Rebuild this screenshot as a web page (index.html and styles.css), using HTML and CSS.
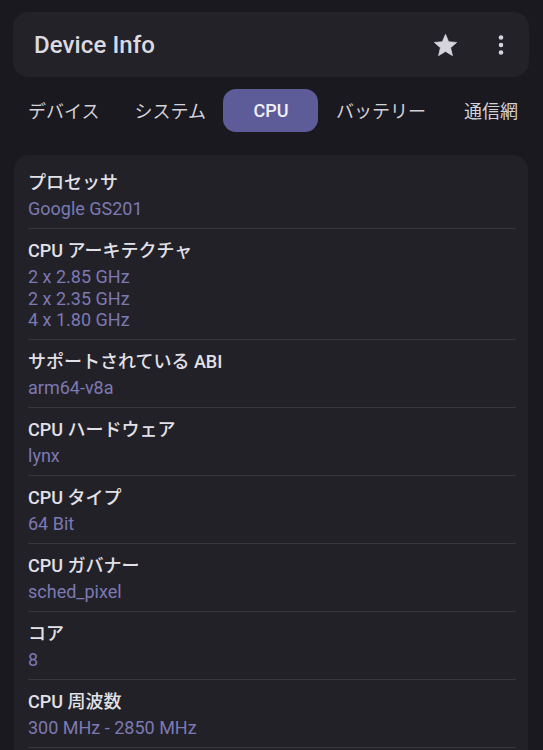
FILE: index.html
```html
<!DOCTYPE html>
<html lang="ja">
<head>
    <meta charset="UTF-8">
    <meta name="viewport" content="width=device-width, initial-scale=1.0">
    <title>Device Info - CPU</title>
    <link rel="stylesheet" href="styles.css">
</head>
<body>
    <div class="app-bar">
        <h1>Device Info</h1>
        <div class="app-bar-actions">
            <button class="icon-btn" aria-label="お気に入り">
                <svg viewBox="0 0 24 24" width="27" height="27">
                    <path d="M12 17.27 18.18 21l-1.64-7.03L22 9.24l-7.19-.61L12 2 9.19 8.63 2 9.24l5.46 4.73L5.82 21z" fill="currentColor" stroke="currentColor" stroke-width="0.6" stroke-linejoin="round"/>
                </svg>
            </button>
            <button class="icon-btn" aria-label="メニュー">
                <svg viewBox="0 0 24 24" width="26" height="26">
                    <circle cx="12" cy="5" r="2.1" fill="currentColor"/>
                    <circle cx="12" cy="12" r="2.1" fill="currentColor"/>
                    <circle cx="12" cy="19" r="2.1" fill="currentColor"/>
                </svg>
            </button>
        </div>
    </div>

    <nav class="tabs">
        <a class="tab">デバイス</a>
        <a class="tab">システム</a>
        <a class="tab active">CPU</a>
        <a class="tab">バッテリー</a>
        <a class="tab">通信網</a>
    </nav>

    <div class="info-card">
        <div class="info-row">
            <div class="info-label">プロセッサ</div>
            <div class="info-value">Google GS201</div>
        </div>
        <div class="info-row">
            <div class="info-label">CPU アーキテクチャ</div>
            <div class="info-value">2 x 2.85 GHz</div>
            <div class="info-value">2 x 2.35 GHz</div>
            <div class="info-value">4 x 1.80 GHz</div>
        </div>
        <div class="info-row">
            <div class="info-label">サポートされている ABI</div>
            <div class="info-value">arm64-v8a</div>
        </div>
        <div class="info-row">
            <div class="info-label">CPU ハードウェア</div>
            <div class="info-value">lynx</div>
        </div>
        <div class="info-row">
            <div class="info-label">CPU タイプ</div>
            <div class="info-value">64 Bit</div>
        </div>
        <div class="info-row">
            <div class="info-label">CPU ガバナー</div>
            <div class="info-value">sched_pixel</div>
        </div>
        <div class="info-row">
            <div class="info-label">コア</div>
            <div class="info-value">8</div>
        </div>
        <div class="info-row">
            <div class="info-label">CPU 周波数</div>
            <div class="info-value">300 MHz - 2850 MHz</div>
        </div>
    </div>
</body>
</html>
```

FILE: styles.css
```css
* {
    margin: 0;
    padding: 0;
    box-sizing: border-box;
}

html, body {
    height: 100%;
    overflow: hidden;
}

body {
    font-family: Roboto, "Noto Sans CJK JP", sans-serif;
    background: #1a191f;
    color: #e0dfe5;
    padding: 12px 14px 0 13px;
}

.app-bar {
    display: flex;
    align-items: center;
    justify-content: space-between;
    height: 65px;
    background: #232229;
    border-radius: 15px;
    padding: 1px 12px 0 21px;
}

.app-bar h1 {
    font-size: 24px;
    font-weight: 500;
    color: #dcdae1;
    letter-spacing: 0.1px;
}

.app-bar-actions {
    display: flex;
    align-items: center;
    gap: 22px;
}

.icon-btn {
    display: flex;
    align-items: center;
    justify-content: center;
    width: 33px;
    height: 33px;
    background: none;
    border: none;
    color: #d6d4dc;
    cursor: pointer;
}

.tabs {
    display: flex;
    margin: 12px 0 0 -2.5px;
    height: 43px;
    overflow: hidden;
    white-space: nowrap;
}

.tab {
    flex-shrink: 0;
    display: flex;
    align-items: center;
    justify-content: center;
    min-width: 95px;
    padding: 0 17.5px 1px;
    font-size: 18px;
    color: #d3d1d9;
    border-radius: 13px;
    cursor: pointer;
}

.tab.active {
    background: #5e5b99;
    color: #f1f0f6;
    font-weight: 500;
}

.info-card {
    margin: 23px 1px 0 1px;
    background: #222128;
    border-radius: 15px;
    padding: 6px 12px 30px 14px;
}

.info-row {
    padding: 10px 0 8.5px;
    border-bottom: 1px solid #38373e;
}

.info-label {
    font-size: 18px;
    line-height: 24px;
    font-weight: 500;
    color: #e2e1e7;
    margin-bottom: 3px;
}

.info-value {
    font-size: 18px;
    line-height: 21.5px;
    color: #7c79b3;
}
```
